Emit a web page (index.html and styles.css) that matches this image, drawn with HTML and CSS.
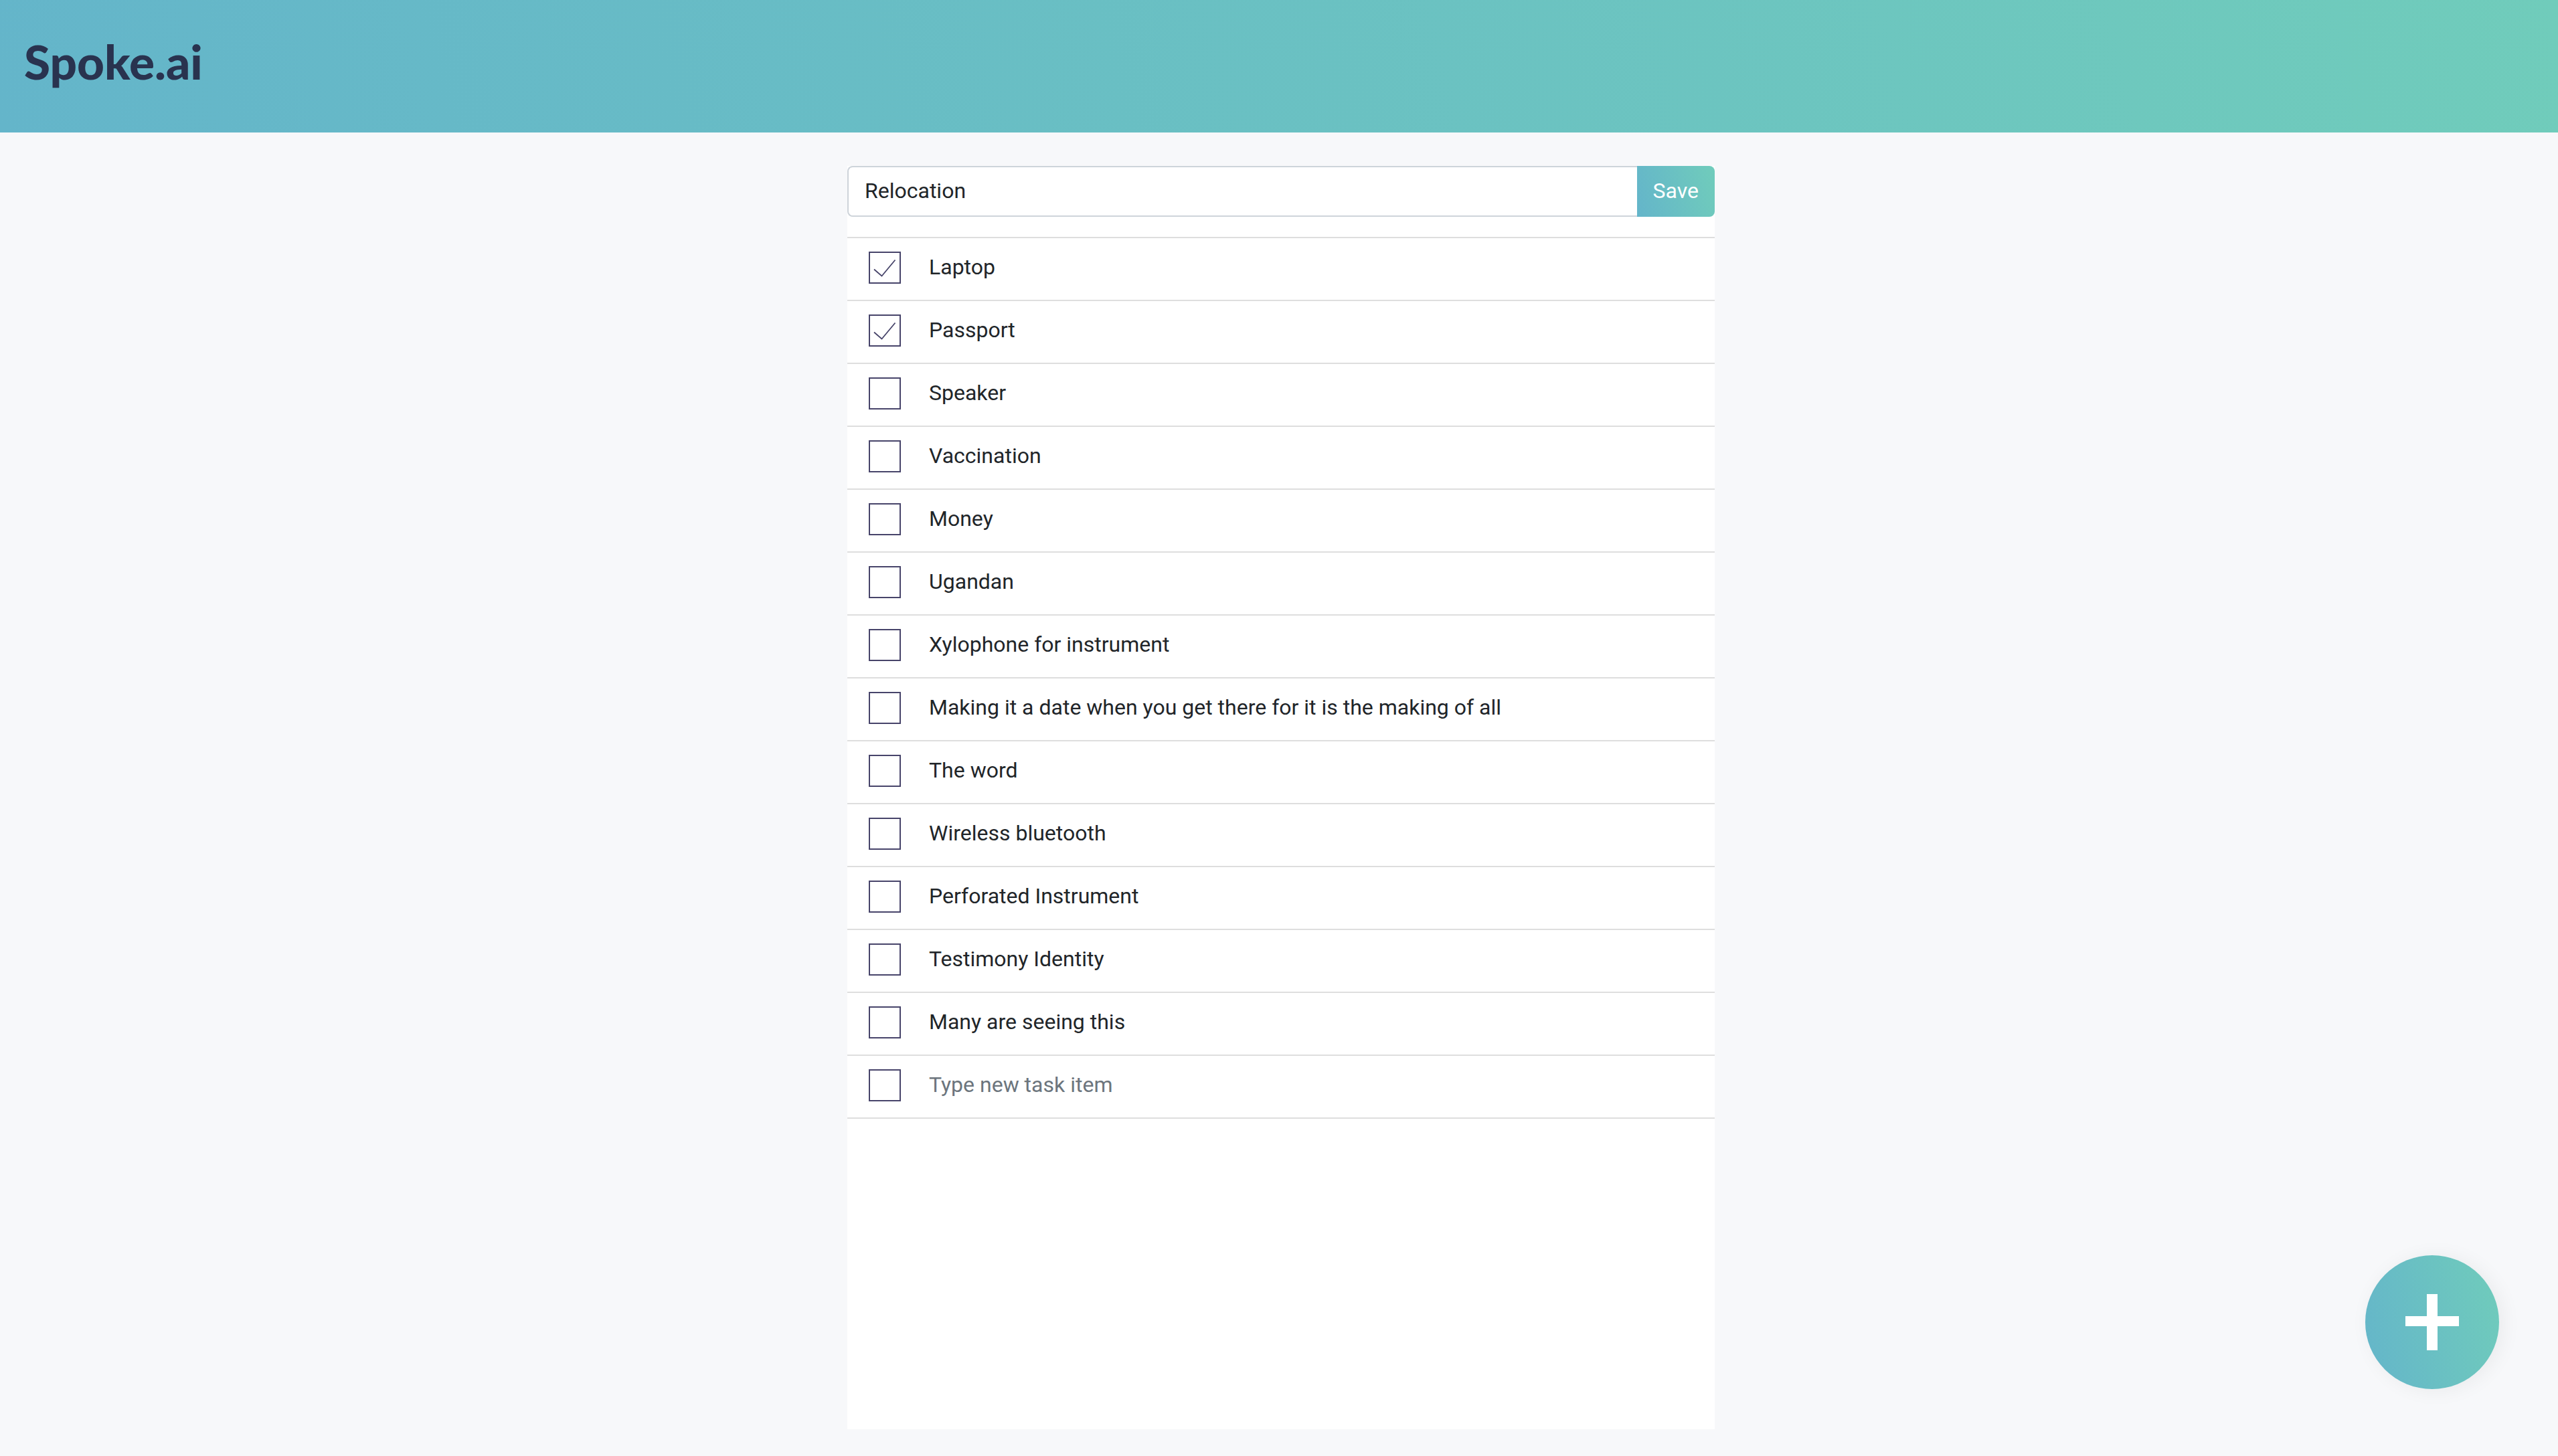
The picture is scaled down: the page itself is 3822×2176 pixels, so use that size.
FILE: index.html
```html
<!DOCTYPE html>
<html lang="en">
<head>
  <meta charset="utf-8">
  <meta name="viewport" content="width=device-width, initial-scale=1">
  <title>Spoke.ai</title>
  <link rel="stylesheet" href="styles.css">
</head>
<body>
  <header class="header">
    <a class="logo" href="#">Spoke.ai</a>
  </header>

  <main class="main">
    <form class="panel">
      <div class="title-bar">
        <input class="title-input" type="text" value="Relocation" aria-label="List title">
        <button class="save-button" type="submit">Save</button>
      </div>

      <ul class="tasks">
        <li class="task"><input class="check" type="checkbox" id="task-1" checked><label class="task-text" for="task-1">Laptop</label></li>
        <li class="task"><input class="check" type="checkbox" id="task-2" checked><label class="task-text" for="task-2">Passport</label></li>
        <li class="task"><input class="check" type="checkbox" id="task-3"><label class="task-text" for="task-3">Speaker</label></li>
        <li class="task"><input class="check" type="checkbox" id="task-4"><label class="task-text" for="task-4">Vaccination</label></li>
        <li class="task"><input class="check" type="checkbox" id="task-5"><label class="task-text" for="task-5">Money</label></li>
        <li class="task"><input class="check" type="checkbox" id="task-6"><label class="task-text" for="task-6">Ugandan</label></li>
        <li class="task"><input class="check" type="checkbox" id="task-7"><label class="task-text" for="task-7">Xylophone for instrument</label></li>
        <li class="task"><input class="check" type="checkbox" id="task-8"><label class="task-text" for="task-8">Making it a date when you get there for it is the making of all</label></li>
        <li class="task"><input class="check" type="checkbox" id="task-9"><label class="task-text" for="task-9">The word</label></li>
        <li class="task"><input class="check" type="checkbox" id="task-10"><label class="task-text" for="task-10">Wireless bluetooth</label></li>
        <li class="task"><input class="check" type="checkbox" id="task-11"><label class="task-text" for="task-11">Perforated Instrument</label></li>
        <li class="task"><input class="check" type="checkbox" id="task-12"><label class="task-text" for="task-12">Testimony Identity</label></li>
        <li class="task"><input class="check" type="checkbox" id="task-13"><label class="task-text" for="task-13">Many are seeing this</label></li>
        <li class="task"><input class="check" type="checkbox" aria-label="New task done"><input class="task-text" type="text" placeholder="Type new task item" aria-label="New task"></li>
      </ul>
    </form>
  </main>

  <button class="add-button" type="button" aria-label="Add list">
    <svg class="add-icon" viewBox="0 0 80 84" aria-hidden="true">
      <path d="M32 0h16v33h32v15H48v36H32V48H0V33h32z" fill="currentColor"/>
    </svg>
  </button>
</body>
</html>
```
FILE: styles.css
```css
:root {
  --brand-gradient: linear-gradient(76deg, #64b5ca 0%, #70ccbb 100%);
  --ink: #212529;
  --logo: #29334f;
  --check: #47446a;
}

*,
*::before,
*::after {
  box-sizing: border-box;
}

body {
  display: flex;
  flex-direction: column;
  min-height: 100vh;
  margin: 0;
  background: #f7f8fa;
  color: var(--ink);
  font-family: Roboto, "Liberation Sans", sans-serif;
  font-size: 32px;
  line-height: 48px;
}

input,
button {
  margin: 0;
  font: inherit;
}

.header {
  padding: 44px 36px 58px;
  background: var(--brand-gradient);
}

.logo {
  display: inline-block;
  color: var(--logo);
  font-family: Lato, sans-serif;
  font-size: 71px;
  font-weight: 900;
  line-height: 96px;
  text-decoration: none;
  vertical-align: top;
}

.main {
  display: flex;
  flex: 1;
  justify-content: center;
  padding: 50px 0 40px 6px;
}

.panel {
  width: 100%;
  max-width: 1296px;
  background: #fff;
}

.title-bar {
  display: flex;
  margin-bottom: 30px;
}

.title-input {
  flex: 1;
  min-width: 0;
  padding: 11px 24px 13px;
  border: 2px solid #ced4da;
  border-right: 0;
  border-radius: 8px 0 0 8px;
  background: #fff;
  color: inherit;
}

.save-button {
  padding: 13px 24px 15px;
  border: 0;
  border-radius: 0 8px 8px 0;
  background: var(--brand-gradient);
  color: #fff;
}

.tasks {
  margin: 0;
  padding: 0;
  border-top: 2px solid #dedede;
  list-style: none;
}

.task {
  display: flex;
  align-items: flex-start;
  gap: 42px;
  padding: 20px 32px 24px;
  border-bottom: 2px solid #dedede;
}

.check {
  flex: none;
  width: 48px;
  height: 48px;
  border: 2px solid var(--check);
  background: #fff;
  appearance: none;
}

.check:checked {
  background: #fff url("data:image/svg+xml,%3Csvg xmlns='http://www.w3.org/2000/svg' viewBox='0 0 44 44'%3E%3Cpath d='M6 24.5L17.500 34.500L37.500 10.500' fill='none' stroke='%2347446a' stroke-width='1.800'/%3E%3C/svg%3E") center / 44px 44px no-repeat;
}

.task-text {
  flex: 1;
  min-width: 0;
  padding: 0;
  border: 0;
  background: none;
  color: inherit;
  line-height: 46px;
}

.task-text::placeholder {
  color: #6c757d;
  opacity: 1;
}

.add-button {
  position: fixed;
  right: 88px;
  bottom: 100px;
  display: flex;
  align-items: center;
  justify-content: center;
  width: 200px;
  height: 200px;
  padding: 0;
  border: 0;
  border-radius: 50%;
  background: var(--brand-gradient);
  box-shadow: 6px 2px 30px rgba(0, 0, 0, 0.06);
  color: #fff;
}

.add-icon {
  width: 80px;
  height: 84px;
}
```
